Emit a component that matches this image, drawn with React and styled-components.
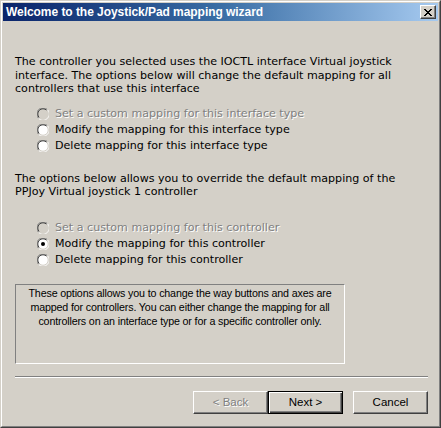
import React, {useState} from 'react';
import styled, {createGlobalStyle} from 'styled-components';

const Global = createGlobalStyle`
  html, body { margin: 0; padding: 0; background: #d4d0c8; }
  body { font-family: "DejaVu Sans", "Liberation Sans", sans-serif; }
`;

const Window = styled.div`
  width: 441px;
  height: 428px;
  box-sizing: border-box;
  border: 1px solid;
  border-color: #d4d0c8 #404040 #404040 #d4d0c8;
  background: #d4d0c8;
`;

const Frame = styled.div`
  height: 100%;
  box-sizing: border-box;
  border: 1px solid;
  border-color: #fff #808080 #808080 #fff;
  padding: 1px;
  display: flex;
  flex-direction: column;
`;

const TitleBar = styled.div`
  height: 18px;
  display: flex;
  align-items: center;
  justify-content: space-between;
  padding: 0 2px 0 3px;
  background: linear-gradient(to right, #0a246a 0%, #3a6ea5 50%, #a6caf0 100%);
`;

const Title = styled.span`
  color: #fff;
  font-family: "Liberation Sans", Arial, sans-serif;
  font-weight: bold;
  font-size: 12px;
  letter-spacing: -0.05px;
`;

const CloseButton = styled.div`
  width: 16px;
  height: 14px;
  box-sizing: border-box;
  background: #d4d0c8;
  border: 1px solid;
  border-color: #fff #404040 #404040 #fff;
  box-shadow: inset -1px -1px 0 #808080;
  display: flex;
  align-items: center;
  justify-content: center;
`;

const Body = styled.div`
  flex: 1;
  display: flex;
  flex-direction: column;
  padding: 34px 10px 0 12px;
  font-family: "DejaVu Sans", sans-serif;
  font-size: 11.1px;
  font-weight: normal;
  color: #000;
`;

const Paragraph = styled.p`
  margin: ${p => p.$top || 0}px 0 0 0;
  line-height: 13.5px;
  white-space: nowrap;
`;

const Options = styled.div`
  display: flex;
  flex-direction: column;
  margin: ${p => p.$top}px 0 0 22px;
`;

const OptionRow = styled.label`
  display: flex;
  align-items: center;
  height: 16px;
  gap: 6px;
  white-space: nowrap;
  color: ${p => (p.$disabled ? '#808080' : '#000')};
  text-shadow: ${p => (p.$disabled ? '1px 1px 0 #fff' : 'none')};
`;

const InfoBox = styled.div`
  width: 330px;
  height: 80px;
  box-sizing: border-box;
  margin-top: 16px;
  border: 1px solid;
  border-color: #808080 #fff #fff #808080;
  padding: 1px 0 0;
  text-align: center;
  font-family: "Liberation Sans", Arial, sans-serif;
  font-size: 10.7px;
  letter-spacing: -0.15px;
  line-height: 14px;
  white-space: nowrap;
`;

const Separator = styled.div`
  height: 0;
  margin-top: 12px;
  border-top: 1px solid #808080;
  border-bottom: 1px solid #fff;
`;

const ButtonRow = styled.div`
  display: flex;
  justify-content: flex-end;
  margin-top: 13px;
`;

const Button = styled.div`
  width: 75px;
  height: 23px;
  box-sizing: border-box;
  margin-left: ${p => p.$gap || 0}px;
  display: flex;
  align-items: center;
  justify-content: center;
  font-family: "Liberation Sans", Arial, sans-serif;
  font-size: 11.5px;
  font-weight: normal;
  background: #d4d0c8;
  border: 1px solid;
  border-color: ${p => (p.$default ? '#000' : '#fff #404040 #404040 #fff')};
  box-shadow: ${p =>
    p.$default
      ? 'inset 1px 1px 0 #fff, inset -1px -1px 0 #404040, inset -2px -2px 0 #808080'
      : 'inset -1px -1px 0 #808080'};
  color: ${p => (p.$disabled ? '#808080' : '#000')};
  text-shadow: ${p => (p.$disabled ? '1px 1px 0 #fff' : 'none')};
`;

function Radio({checked, disabled}) {
  const fill = disabled ? '#d4d0c8' : '#fff';
  return (
    <svg width="12" height="12" viewBox="0 0 12 12">
      <circle cx="6" cy="6" r="5.5" fill={fill} />
      <path d="M1.6 10.4 A6 6 0 0 1 10.4 1.6" fill="none" stroke="#808080" strokeWidth="1" />
      <path d="M2.3 9.7 A5 5 0 0 1 9.7 2.3" fill="none" stroke="#404040" strokeWidth="1" />
      <path d="M10.4 1.6 A6 6 0 0 1 1.6 10.4" fill="none" stroke="#fff" strokeWidth="1" />
      <path d="M9.7 2.3 A5 5 0 0 1 2.3 9.7" fill="none" stroke="#d4d0c8" strokeWidth="1" />
      {checked && <circle cx="6" cy="6" r="2" fill="#000" />}
    </svg>
  );
}

function Option({label, checked, disabled}) {
  return (
    <OptionRow $disabled={disabled}>
      <Radio checked={checked} disabled={disabled} />
      {label}
    </OptionRow>
  );
}

export default function App() {
  const [iface] = useState([
    {label: 'Set a custom mapping for this interface type', disabled: true},
    {label: 'Modify the mapping for this interface type'},
    {label: 'Delete mapping for this interface type'}
  ]);
  const [ctrl] = useState([
    {label: 'Set a custom mapping for this controller', disabled: true},
    {label: 'Modify the mapping for this controller', checked: true},
    {label: 'Delete mapping for this controller'}
  ]);

  return (
    <>
      <Global />
      <Window>
        <Frame>
          <TitleBar>
            <Title>Welcome to the Joystick/Pad mapping wizard</Title>
            <CloseButton>
              <svg width="8" height="7" viewBox="0 0 8 7">
                <path d="M0 0 L7 7 M1 0 L8 7 M7 0 L0 7 M8 0 L1 7" stroke="#000" strokeWidth="1" />
              </svg>
            </CloseButton>
          </TitleBar>
          <Body>
            <Paragraph>
              The controller you selected uses the IOCTL interface Virtual joystick<br />
              interface. The options below will change the default mapping for all<br />
              controllers that use this interface
            </Paragraph>
            <Options $top={10}>
              {iface.map(o => <Option key={o.label} {...o} />)}
            </Options>
            <Paragraph $top={18}>
              The options below allows you to override the default mapping of the<br />
              PPJoy Virtual joystick 1 controller
            </Paragraph>
            <Options $top={21}>
              {ctrl.map(o => <Option key={o.label} {...o} />)}
            </Options>
            <InfoBox>
              These options allows you to change the way buttons and axes are<br />
              mapped for controllers. You can either change the mapping for all<br />
              controllers on an interface type or for a specific controller only.
            </InfoBox>
            <Separator />
            <ButtonRow>
              <Button $disabled>&lt; Back</Button>
              <Button $default>Next &gt;</Button>
              <Button $gap={10}>Cancel</Button>
            </ButtonRow>
          </Body>
        </Frame>
      </Window>
    </>
  );
}
